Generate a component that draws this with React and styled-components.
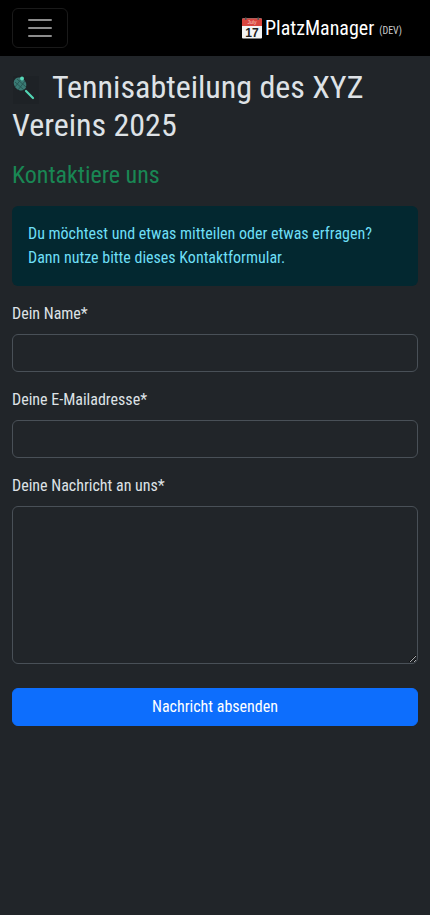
import React from "react";
import styled, { createGlobalStyle } from "styled-components";

const GlobalStyle = createGlobalStyle`
    * {
        box-sizing: border-box;
    }

    html, body {
        margin: 0;
        min-height: 100%;
    }

    body {
        background-color: #212529;
        color: #dee2e6;
        font-family: "Roboto Condensed", Roboto, "Liberation Sans", sans-serif;
        font-stretch: condensed;
        font-size: 16px;
        line-height: 1.5;
    }
`

const Navbar = styled.nav`
    display: flex;
    align-items: center;
    justify-content: space-between;
    height: 56px;
    padding: 0 12px;
    background-color: #000;
`

const Toggler = styled.button`
    display: flex;
    align-items: center;
    justify-content: center;
    width: 56px;
    height: 40px;
    padding: 0;
    background: transparent;
    border: 1px solid rgba(255, 255, 255, .1);
    border-radius: 6px;
`

const Brand = styled.a`
    display: flex;
    align-items: center;
    margin-right: 16px;
    color: #fff;
    font-size: 20px;
    white-space: nowrap;
`

const BrandName = styled.span`
    margin-left: 2px;
`

const Env = styled.small`
    margin-left: 5px;
    margin-top: 5px;
    font-size: 10px;
    color: #ccc;
`

const Main = styled.main`
    padding: 12px 12px 0;
`

const Title = styled.h1`
    margin: 0 0 16px;
    font-size: 32px;
    font-weight: 400;
    line-height: 1.2;
`

const RacketIcon = styled.svg`
    display: inline-block;
    width: 32px;
    height: 32px;
    margin-right: 8px;
    vertical-align: -6px;
`

const SubTitle = styled.h3`
    margin: 0 0 16px;
    font-size: 24px;
    font-weight: 400;
    line-height: 1.2;
    color: #198754;
`

const Alert = styled.div`
    margin-bottom: 16px;
    padding: 16px;
    background-color: #032830;
    border-radius: 6px;
    color: #6edff6;
`

const Field = styled.div`
    margin-bottom: ${props => props.$last ? "24px" : "16px"};
`

const Label = styled.label`
    display: block;
    margin-bottom: 8px;
`

const Input = styled.input`
    display: block;
    width: 100%;
    height: 38px;
    padding: 6px 12px;
    background-color: #212529;
    border: 1px solid #495057;
    border-radius: 6px;
    color: #dee2e6;
    font: inherit;
`

const TextArea = styled.textarea`
    display: block;
    width: 100%;
    height: 158px;
    padding: 6px 12px;
    background-color: #212529;
    border: 1px solid #495057;
    border-radius: 6px;
    color: #dee2e6;
    font: inherit;
    color-scheme: dark;
`

const SubmitButton = styled.button`
    display: block;
    width: 100%;
    height: 38px;
    padding: 6px 12px;
    background-color: #0d6efd;
    border: 1px solid #0d6efd;
    border-radius: 6px;
    color: #fff;
    font: inherit;
`

const CalendarText = styled.text`
    font-family: "Liberation Sans", sans-serif;
    font-stretch: normal;
    text-anchor: middle;
`

function CalendarIcon() {
    return (
        <svg width="22" height="22" viewBox="0 0 22 22">
            <rect x="1" y="1.5" width="20" height="20" rx="1" fill="#f4f4f4" />
            <path d="M1 2.5a1 1 0 0 1 1-1h18a1 1 0 0 1 1 1V9H1z" fill="#d8453e" />
            <rect x="4" y="0.5" width="1.5" height="2.5" fill="#555" />
            <rect x="16.5" y="0.5" width="1.5" height="2.5" fill="#555" />
            <CalendarText x="11" y="7" fontSize="5" fill="#f8d0c8">July</CalendarText>
            <CalendarText x="11" y="20" fontSize="12" fontWeight="700" fill="#222">17</CalendarText>
        </svg>
    )
}

function TogglerIcon() {
    return (
        <svg width="30" height="30" viewBox="0 0 30 30">
            <path d="M4 7h22M4 15h22M4 23h22" stroke="rgba(255,255,255,.55)" strokeWidth="2" strokeLinecap="round" />
        </svg>
    )
}

function TennisIcon() {
    return (
        <RacketIcon viewBox="0 0 32 32">
            <rect x="1" y="4" width="26" height="28" fill="#1e2226" />
            <ellipse cx="8" cy="12" rx="5.8" ry="7" transform="rotate(-40 8 12)" fill="#3a7a74" />
            <path d="M3 10l9 8M5 7l9 8M3 15l7-9M6 18l7-9" stroke="#24504d" strokeWidth=".8" />
            <path d="M14 19l7 7" stroke="#52d6b4" strokeWidth="2.2" strokeLinecap="round" />
            <circle cx="10" cy="6.5" r="2" fill="#58d8b8" />
        </RacketIcon>
    )
}

export default function App() {
    return (
        <>
            <GlobalStyle />
            <Navbar>
                <Toggler aria-label="Navigation">
                    <TogglerIcon />
                </Toggler>
                <Brand>
                    <CalendarIcon />
                    <BrandName>PlatzManager</BrandName>
                    <Env>(DEV)</Env>
                </Brand>
            </Navbar>
            <Main>
                <Title><TennisIcon />Tennisabteilung des XYZ Vereins 2025</Title>
                <SubTitle>Kontaktiere uns</SubTitle>
                <Alert>
                    Du möchtest und etwas mitteilen oder etwas erfragen?<br />
                    Dann nutze bitte dieses Kontaktformular.
                </Alert>
                <form>
                    <Field>
                        <Label htmlFor="name">Dein Name*</Label>
                        <Input id="name" type="text" />
                    </Field>
                    <Field>
                        <Label htmlFor="email">Deine E-Mailadresse*</Label>
                        <Input id="email" type="text" />
                    </Field>
                    <Field $last>
                        <Label htmlFor="message">Deine Nachricht an uns*</Label>
                        <TextArea id="message" />
                    </Field>
                    <SubmitButton type="button">Nachricht absenden</SubmitButton>
                </form>
            </Main>
        </>
    )
}
